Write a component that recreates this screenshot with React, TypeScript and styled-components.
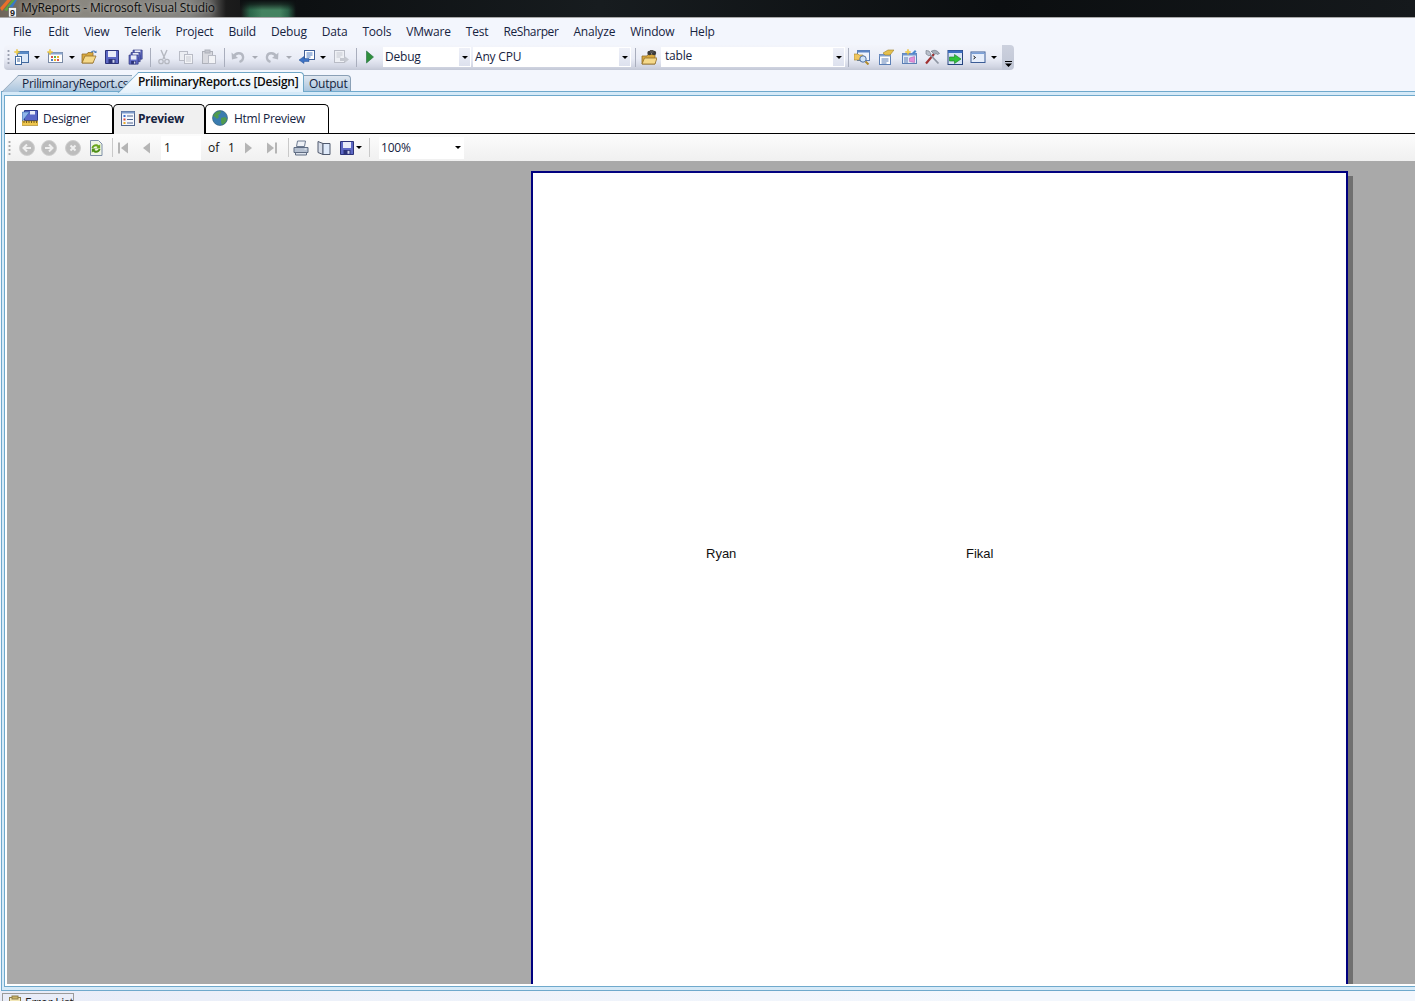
import React from "react";
import styled, { createGlobalStyle } from "styled-components";

const Global = createGlobalStyle`
  html, body { margin: 0; padding: 0; background: #f3f6fd; }
  body { font-family: "Open Sans", "Liberation Sans", sans-serif; font-size: 12px; color: #14233c; }
`;

const Page = styled.div`
  width: 1415px;
  height: 1001px;
  overflow: hidden;
  display: flex;
  flex-direction: column;
  background: #f3f6fd;
`;

const TitleBar = styled.div`
  height: 17px;
  flex: none;
  display: flex;
  align-items: flex-start;
  gap: 4px;
  border-bottom: 1px solid #a9a9a9;
  background:
    linear-gradient(180deg, #0c0f11 0, rgba(12, 15, 17, 0.75) 25%, rgba(12, 15, 17, 0.1) 60%) 240px 0 / 56px 100% no-repeat,
    linear-gradient(90deg, transparent 241px, #2f7050 250px, #4a9069 262px, #4a9069 280px, #2f6b4e 288px, transparent 296px),
    linear-gradient(90deg, #6e655a 0, #8b8880 70px, #84837f 190px, #666563 210px, #1c1c1c 226px, #0d1012 300px, #171c1f 600px, #0b0e10 1000px, #15191c 1415px);
`;

const TitleText = styled.span`
  font-size: 12px;
  line-height: 15px;
  color: #0c0c0c;
  text-shadow: 0 0 4px rgba(255, 255, 255, 0.55);
  letter-spacing: -0.13px;
  white-space: nowrap;
`;

const MenuBar = styled.nav`
  height: 27px;
  flex: none;
  display: flex;
  align-items: center;
  gap: 15px;
  padding-left: 13px;
`;

const MenuItem = styled.span`
  color: #16233f;
  white-space: nowrap;
  letter-spacing: -0.18px;
  &:first-child {
    margin-right: 2px;
  }
  &:nth-child(12) {
    letter-spacing: -0.4px;
  }
`;

const ToolRow = styled.div`
  height: 25px;
  flex: none;
  display: flex;
  align-items: stretch;
`;

const ToolBar = styled.div`
  margin-left: 4px;
  width: 998px;
  display: flex;
  align-items: center;
  padding: 0 0 1px 2px;
  box-sizing: border-box;
  border-radius: 4px 0 0 4px;
  background: linear-gradient(180deg, #f3f5fb 0%, #e9ecf6 55%, #d3d7e4 85%, #c3c8d6 100%);
`;

const Overflow = styled.div`
  width: 12px;
  border-radius: 0 4px 4px 0;
  background: linear-gradient(180deg, #ccd1de, #c0c6d5);
  display: flex;
  align-items: flex-end;
  justify-content: center;
  padding-bottom: 3px;
  box-sizing: border-box;
`;

const Grip = styled.span<{ $w: number; $color: string }>`
  width: ${(p) => p.$w}px;
  flex: none;
  align-self: center;
  height: 16px;
  box-sizing: border-box;
  background-image: radial-gradient(circle, ${(p) => p.$color} 1px, transparent 1.2px);
  background-size: 3px 4px;
  background-repeat: repeat-y;
  background-position: 1px 0;
`;

const Slot = styled.span<{ $w: number }>`
  width: ${(p) => p.$w}px;
  flex: none;
  height: 100%;
  display: flex;
  align-items: center;
  justify-content: center;
`;

const Separator = styled.span<{ $w: number; $color: string }>`
  width: ${(p) => p.$w}px;
  flex: none;
  height: 19px;
  display: flex;
  justify-content: center;
  &::before {
    content: "";
    width: 1px;
    background: ${(p) => p.$color};
  }
`;

const Combo = styled.div<{ $w: number; $h: number; $ml?: number }>`
  width: ${(p) => p.$w}px;
  height: ${(p) => p.$h}px;
  margin-left: ${(p) => p.$ml ?? 0}px;
  flex: none;
  box-sizing: border-box;
  display: flex;
  align-items: center;
  background: #fff;
  padding: 1px 1px 1px 2px;
  color: #16233f;
`;

const ComboText = styled.span<{ $lift?: number; $indent?: number }>`
  flex: 1;
  letter-spacing: -0.2px;
  white-space: nowrap;
  padding-left: ${(p) => p.$indent ?? 0}px;
  padding-bottom: ${(p) => p.$lift ?? 0}px;
`;

const ComboButton = styled.span<{ $plain?: boolean }>`
  width: 11px;
  align-self: stretch;
  display: flex;
  align-items: center;
  justify-content: center;
  background: ${(p) => (p.$plain ? "#fff" : "linear-gradient(180deg, #eef0f8, #dde1ee)")};
`;

const TabStrip = styled.div`
  height: 21px;
  flex: none;
  display: flex;
  align-items: flex-end;
  position: relative;
  z-index: 1;
`;

const FirstTab = styled.div`
  position: relative;
  z-index: 1;
  margin-left: 18px;
  width: 114px;
  height: 16px;
  box-sizing: border-box;
  padding-left: 4px;
  border-top: 1px solid #8aa0b6;
  background: linear-gradient(180deg, #dfe6ef, #a8c4dd);
  color: #15233d;
  line-height: 15px;
  letter-spacing: -0.33px;
  white-space: nowrap;
  &::before {
    content: "";
    position: absolute;
    z-index: -1;
    top: -1px;
    left: -8px;
    width: 16px;
    height: 16px;
    border: 1px solid #8aa0b6;
    border-width: 1px 0 0 1px;
    transform: skewX(-45deg);
    background: linear-gradient(180deg, #dfe6ef, #a8c4dd);
  }
`;

const ActiveTab = styled.div`
  position: relative;
  z-index: 3;
  margin-left: 6px;
  margin-bottom: -1px;
  width: 166px;
  height: 20px;
  box-sizing: border-box;
  border: 1px solid #6fa6c6;
  border-width: 1px 1px 0 0;
  border-radius: 0 4px 0 0;
  background: linear-gradient(180deg, #ffffff, #e4f1fb);
  font-weight: 600;
  color: #0c0c0c;
  line-height: 17px;
  letter-spacing: -0.27px;
  white-space: nowrap;
  &::before {
    content: "";
    position: absolute;
    z-index: -1;
    top: -1px;
    left: -10px;
    width: 20px;
    height: 20px;
    border: 1px solid #6fa6c6;
    border-width: 1px 0 0 1px;
    transform: skewX(-45deg);
    background: linear-gradient(180deg, #ffffff, #e4f1fb);
  }
`;

const PlainTab = styled.div`
  position: relative;
  z-index: 1;
  width: 47px;
  height: 16px;
  box-sizing: border-box;
  padding-left: 5px;
  border: 1px solid #8aa0b6;
  border-width: 1px 1px 0 0;
  border-radius: 0 4px 0 0;
  background: linear-gradient(180deg, #e0e7f0, #a8c4dd);
  color: #15233d;
  line-height: 15px;
  letter-spacing: -0.25px;
`;

const Well = styled.div`
  flex: none;
  height: 900px;
  box-sizing: border-box;
  margin-left: 1px;
  border: 1px solid #6fa9cc;
  border-width: 1px 0 1px 1px;
  padding: 3px 0 3px 2px;
  background: #d6eaf8;
  display: flex;
`;

const WellInner = styled.div`
  flex: 1;
  min-width: 0;
  box-sizing: border-box;
  border: 1px solid #6fa9cc;
  border-width: 1px 0 1px 1px;
  background: #fff;
  padding: 8px 0 2px 0;
  display: flex;
  flex-direction: column;
`;

const ViewTabs = styled.div`
  height: 30px;
  flex: none;
  box-sizing: border-box;
  display: flex;
  padding-left: 10px;
  border-bottom: 1px solid #000;
`;

const ViewTab = styled.div<{ $w: number; $active?: boolean; $pl: number; $gap: number }>`
  width: ${(p) => p.$w}px;
  flex: none;
  height: ${(p) => (p.$active ? 30 : 29)}px;
  box-sizing: border-box;
  display: flex;
  align-items: center;
  gap: ${(p) => p.$gap}px;
  padding: 0 0 ${(p) => (p.$active ? 3 : 2)}px ${(p) => p.$pl}px;
  border: 1px solid #000;
  border-bottom: 0;
  border-radius: 5px 5px 0 0;
  background: ${(p) => (p.$active ? "#f0f0f0" : "#fff")};
  font-weight: ${(p) => (p.$active ? 700 : 400)};
  color: #16233f;
  letter-spacing: -0.28px;
`;

const ReportBar = styled.div`
  height: 27px;
  flex: none;
  margin-left: 2px;
  display: flex;
  align-items: center;
  background: linear-gradient(180deg, #fcfcfc, #f0f0f0);
`;

const PageInput = styled.div`
  width: 40px;
  height: 24px;
  flex: none;
  box-sizing: border-box;
  background: #fff;
  padding-left: 3px;
  line-height: 24px;
  color: #111;
`;

const PlainLabel = styled.span<{ $w: number }>`
  width: ${(p) => p.$w}px;
  flex: none;
  box-sizing: border-box;
  padding-left: 7px;
  color: #111;
`;

const Canvas = styled.div`
  flex: 1;
  min-height: 0;
  margin-left: 2px;
  background: #a9a9a9;
  overflow: hidden;
  padding: 10px 0 0 524px;
`;

const Sheet = styled.div`
  width: 817px;
  height: 1000px;
  box-sizing: border-box;
  border: 2px solid #00007f;
  background: #fff;
  box-shadow: 5px 5px 0 #707070;
  padding: 373px 0 0 173px;
  display: flex;
  font-family: "Liberation Sans", Arial, sans-serif;
  font-size: 13px;
  color: #111;
`;

const ReportCell = styled.span`
  width: 260px;
  flex: none;
  height: 16px;
  line-height: 16px;
`;

const BottomBar = styled.div`
  flex: 1;
  background: linear-gradient(90deg, #e8ecf8 0, #eef2fa 400px, #f3f7fd 1000px);
  padding: 2px 0 0 2px;
`;

const BottomTab = styled.div`
  width: 72px;
  height: 20px;
  box-sizing: border-box;
  border: 1px solid #9a9a9a;
  display: flex;
  align-items: flex-start;
  gap: 2px;
  padding: 1px 0 0 4px;
  font-size: 12px;
  line-height: 16px;
  color: #222;
  white-space: nowrap;
  overflow: hidden;
  letter-spacing: -0.25px;
`;

const Ico = styled.svg`
  width: 16px;
  height: 16px;
  flex: none;
  display: block;
`;

const LogoSvg = styled.svg`
  width: 17px;
  height: 17px;
  flex: none;
  display: block;
`;

const Arrow = styled.span<{ $muted?: boolean }>`
  width: 0;
  height: 0;
  border-left: 3px solid transparent;
  border-right: 3px solid transparent;
  border-top: 3px solid ${(p) => (p.$muted ? "#a8abb4" : "#000")};
`;

const Chevron = styled.svg`
  width: 7px;
  height: 7px;
  display: block;
`;

const Icon = ({ children }: { children: React.ReactNode }) => <Ico viewBox="0 0 16 16">{children}</Ico>;

const Star = ({ x = 0, y = 0 }: { x?: number; y?: number }) => (
  <g transform={`translate(${x} ${y})`}>
    <path d="M3 0l.8 2.2L6 3l-2.2.8L3 6l-.8-2.2L0 3l2.2-.8z" fill="#f6d44a" stroke="#e2b324" strokeWidth=".4" />
  </g>
);

const NewProjectIcon = () => (
  <Icon>
    <rect x="3.5" y="2.5" width="11" height="11" fill="#dce9f8" stroke="#41699e" />
    <rect x="3.5" y="2.5" width="11" height="2.5" fill="#5a8bc6" />
    <rect x="1.5" y="7.5" width="6" height="8" fill="#fff" stroke="#41699e" />
    <path d="M3 10h3M3 12h3" stroke="#41699e" />
    <Star x={0} y={0} />
  </Icon>
);
const AddItemIcon = () => (
  <Icon>
    <rect x="1.5" y="3.5" width="14" height="10" fill="#fdfdfd" stroke="#7a8aa5" />
    <rect x="1.5" y="3.5" width="14" height="2" fill="#8aa6cf" />
    <rect x="4" y="7" width="2" height="2" fill="#d9534f" />
    <rect x="7" y="7" width="2" height="2" fill="#5cae4a" />
    <rect x="10" y="7" width="2" height="2" fill="#e8b32a" />
    <rect x="4" y="10" width="2" height="2" fill="#4a7cc8" />
    <rect x="7" y="10" width="2" height="2" fill="#e8b32a" />
    <rect x="10" y="10" width="2" height="2" fill="#d9534f" />
    <Star x={0} y={0} />
  </Icon>
);
const OpenIcon = () => (
  <Icon>
    <path d="M1 5h5l1-1.500h5V14H1z" fill="#d9a93e" stroke="#94702a" strokeWidth=".8" />
    <path d="M1 14l3-7h11l-3 7z" fill="#f5d98a" stroke="#94702a" strokeWidth=".8" />
    <path d="M10 3.500c1.500-2 3.500-2 4.500-.5" fill="none" stroke="#4e7db8" strokeWidth="1.100" />
    <path d="M15.500 1.500v2.500h-2.500z" fill="#4e7db8" />
  </Icon>
);
const Floppy = ({ c = "#5d68c4", d = "#2c3378" }: { c?: string; d?: string }) => (
  <>
    <path d="M1.500 1.500h13v13h-13z" fill={c} stroke={d} />
    <rect x="4" y="2" width="8" height="6" fill="#e9ecf8" />
    <rect x="4.500" y="10" width="7" height="4.500" fill="#2c3378" />
    <rect x="8.500" y="10.800" width="2" height="3" fill="#cdd3ee" />
  </>
);
const SaveIcon = () => (
  <Icon>
    <Floppy />
  </Icon>
);
const SaveAllIcon = () => (
  <Icon>
    <g transform="translate(5 0) scale(.7)">
      <Floppy />
    </g>
    <g transform="translate(3 2.500) scale(.7)">
      <Floppy />
    </g>
    <g transform="translate(1 5) scale(.7)">
      <Floppy />
    </g>
  </Icon>
);
const CutIcon = () => (
  <Icon>
    <path d="M5 1l4 9M11 1l-4 9" stroke="#b5b8c0" strokeWidth="1.400" fill="none" />
    <circle cx="5" cy="12.500" r="2.200" fill="none" stroke="#b5b8c0" strokeWidth="1.300" />
    <circle cx="11" cy="12.500" r="2.200" fill="none" stroke="#b5b8c0" strokeWidth="1.300" />
  </Icon>
);
const CopyIcon = () => (
  <Icon>
    <rect x="1.500" y="2.500" width="8" height="9" fill="#eceef3" stroke="#b9bcc6" />
    <rect x="6.500" y="5.500" width="8" height="9" fill="#f3f4f7" stroke="#b9bcc6" />
    <path d="M8 8h5M8 10h5M8 12h5" stroke="#c7cad2" />
  </Icon>
);
const PasteIcon = () => (
  <Icon>
    <rect x="1.500" y="2.500" width="10" height="12" fill="#d9dae0" stroke="#aeb1ba" />
    <rect x="4" y="1" width="5" height="3" fill="#c3c5cd" stroke="#aeb1ba" />
    <rect x="7.500" y="6.500" width="7" height="8" fill="#f2f3f6" stroke="#b9bcc6" />
  </Icon>
);
const UndoIcon = ({ flip = false }: { flip?: boolean }) => (
  <Icon>
    <g transform={flip ? "translate(16 0) scale(-1 1)" : undefined}>
      <path d="M4 7.500c1.500-4 8-4.500 9 0 .5 2.500-1 4.500-3.500 5.500" fill="none" stroke="#b4b8c2" strokeWidth="2.400" />
      <path d="M1.500 3.500l.5 7 6-1.500z" fill="#b4b8c2" />
    </g>
  </Icon>
);
const NavIcon = () => (
  <Icon>
    <rect x="5.500" y="1.500" width="10" height="9" fill="#fff" stroke="#3f5f98" />
    <path d="M7.500 4h6M7.500 6h6M7.500 8h4" stroke="#4b78c0" />
    <path d="M0 11l5-3.500v2h5v3H5v2z" fill="#3d72c4" stroke="#234f92" strokeWidth=".5" />
  </Icon>
);
const GhostNavIcon = () => (
  <Icon>
    <rect x="1.500" y="1.500" width="10" height="12" fill="#eef0f5" stroke="#b9bcc6" />
    <path d="M3.500 4h6M3.500 6h6M3.500 8h4" stroke="#c6c9d1" />
    <path d="M16 10.500l-4.500-3.500v2H7v3h4.500v2z" fill="#c5c8d0" />
  </Icon>
);
const PlayIcon = () => (
  <Icon>
    <path d="M4.500 2l7 6-7 6z" fill="#2f8f3c" stroke="#1f6d3b" strokeWidth=".6" />
  </Icon>
);
const FindFolderIcon = () => (
  <Icon>
    <path d="M1 7h5l1-1.500h7V15H1z" fill="#d9a93e" stroke="#8f6d28" strokeWidth=".8" />
    <path d="M1 15l2.500-6H16l-2 6z" fill="#f5d98a" stroke="#8f6d28" strokeWidth=".8" />
    <circle cx="8.500" cy="4" r="2.200" fill="#3b3b3b" />
    <circle cx="13" cy="4" r="2.200" fill="#3b3b3b" />
    <rect x="9" y="1" width="3.500" height="3" fill="#555" />
  </Icon>
);
const SolutionIcon = () => (
  <Icon>
    <rect x="3.500" y="1.500" width="12" height="10" fill="#eef4fc" stroke="#5b7fb5" />
    <rect x="3.500" y="1.500" width="12" height="2" fill="#5b86c6" />
    <path d="M0 5h4l1 1h4v5H0z" fill="#efc660" stroke="#a27f2e" strokeWidth=".6" />
    <circle cx="9" cy="10" r="3.200" fill="#cfe4f8" stroke="#4f6f9f" />
    <path d="M11.500 12.500l3 3" stroke="#b08a2c" strokeWidth="2" />
  </Icon>
);
const PropsIcon = () => (
  <Icon>
    <rect x="1.500" y="5.500" width="11" height="10" fill="#fff" stroke="#5b7fb5" />
    <rect x="1.500" y="5.500" width="11" height="2" fill="#86a4d0" />
    <path d="M3.500 10h7M3.500 12h7M3.500 14h5" stroke="#5b7fb5" />
    <path d="M5 4l5-3h6l-4 5H7z" fill="#e5c04e" stroke="#9f822a" strokeWidth=".6" />
  </Icon>
);
const ToolboxIcon = () => (
  <Icon>
    <rect x="1.500" y="4.500" width="14" height="10" fill="#e2ebf8" stroke="#5b7fb5" />
    <rect x="1.500" y="4.500" width="14" height="2" fill="#6d95cf" />
    <path d="M3 9h4M3 11h4M3 13h4" stroke="#5b7fb5" />
    <path d="M8.500 9l5-1.500v6l-5-1z" fill="#e38fd8" stroke="#a457a8" strokeWidth=".5" />
    <Star x={4} y={0} />
    <path d="M11 4l3-3 1.500 1.500-3 3z" fill="#4b88d0" />
  </Icon>
);
const ToolsIcon = () => (
  <Icon>
    <path d="M2 14.500L10 5" stroke="#a03030" strokeWidth="2.200" />
    <path d="M7 2.500c3-2 6-1.500 8.500 2l-2 1-1.500-1-1.500 1-3-3z" fill="#a6adb8" stroke="#666e7c" strokeWidth=".6" />
    <path d="M14.500 14.500L6 5.500" stroke="#8f96a3" strokeWidth="1.800" />
    <path d="M2 1.500l3 .5 2 3-2 2-3-2z" fill="#b9c0cc" stroke="#6d7482" strokeWidth=".6" />
  </Icon>
);
const ImmediateIcon = () => (
  <Icon>
    <rect x="1" y="1.500" width="14.500" height="14" fill="#d7e4f6" stroke="#26447e" />
    <rect x="1" y="1.500" width="14.500" height="2.500" fill="#3e6fc0" />
    <path d="M2.500 8h5V5.500l6.500 4.500-6.500 4.500V12h-5z" fill="#2fc23b" stroke="#167a20" strokeWidth=".6" />
  </Icon>
);
const ConsoleIcon = () => (
  <Icon>
    <rect x="1" y="3" width="14" height="10.500" fill="#e6eefb" stroke="#3b5c96" />
    <rect x="1.500" y="3.500" width="13" height="1.500" fill="#7aa0d8" />
    <path d="M3.500 7l2 1.500-2 1.500" fill="none" stroke="#111" />
  </Icon>
);
const CircleGlyph = ({ d }: { d: string }) => (
  <Icon>
    <circle cx="8" cy="8" r="7.500" fill="#bdbdbd" stroke="#cfcfcf" />
    <path d={d} fill="none" stroke="#efefef" strokeWidth="2" />
  </Icon>
);
const RefreshIcon = () => (
  <Icon>
    <path d="M2.500 .5h8l3.500 3.500v11.500H2.500z" fill="#f0f5e6" stroke="#7f8fa8" />
    <path d="M3.500 8c.5-3.500 5-5 7.500-2.500l1.200-1.200v4.200H8l1.600-1.600c-1.600-1.300-3.800-.5-4.100 1.100z" fill="#6aa51a" />
    <path d="M12.500 9c-.5 3.500-5 5-7.500 2.500l-1.200 1.200V8.500H8l-1.600 1.600c1.600 1.300 3.800.5 4.100-1.100z" fill="#4d8f14" />
  </Icon>
);
const StepIcon = ({ dir, bar }: { dir: "l" | "r"; bar?: boolean }) => (
  <Icon>
    <g transform={dir === "r" ? "translate(16 0) scale(-1 1)" : undefined}>
      {bar && <rect x="2" y="2.500" width="2" height="11" fill="#b5b5b5" />}
      <path d="M12 2.500v11L5 8z" fill="#b5b5b5" />
    </g>
  </Icon>
);
const PrintIcon = () => (
  <Icon>
    <path d="M4.500 1h8l-1 5.500h-8z" fill="#eef1f6" stroke="#6c7a90" />
    <path d="M1 7.500h14v5H1z" fill="#b5c0d0" stroke="#5f6c82" />
    <path d="M2.500 12.500h11v2.500h-11z" fill="#dde3ec" stroke="#5f6c82" />
    <rect x="11.500" y="8.500" width="2" height="1" fill="#eef3fa" />
  </Icon>
);
const BookIcon = () => (
  <Icon>
    <path d="M2 1.500l5 2v11l-5-2z" fill="#d7dde8" stroke="#505a6e" />
    <path d="M7 3.500h7v11H7z" fill="#dfeafa" stroke="#505a6e" />
  </Icon>
);
const DesignerIcon = () => (
  <Icon>
    <path d="M2.500 .5h13v10h-13z" fill="#5a68c8" stroke="#2c3a8c" />
    <rect x="8" y="1" width="5" height="3.500" fill="#e9ecf8" />
    <path d="M.5 2v9l7-9z" fill="#8fb6ea" stroke="#2c5fa8" strokeWidth=".6" />
    <rect x="0" y="11" width="16" height="4.500" fill="#efc64d" stroke="#a17f22" strokeWidth=".6" />
    <path d="M2 11v2M4.500 11v2M7 11v2M9.500 11v2M12 11v2M14.500 11v2" stroke="#7b6016" />
  </Icon>
);
const PreviewIcon = () => (
  <Icon>
    <rect x="1.500" y="1.500" width="13" height="14" fill="#f4f7fd" stroke="#50658e" />
    <rect x="1.500" y="1.500" width="13" height="2" fill="#7f9ccb" />
    <rect x="3.500" y="5" width="2" height="2" fill="#3a6bd0" />
    <rect x="3.500" y="8.500" width="2" height="2" fill="#d9453b" />
    <rect x="3.500" y="12" width="2" height="2" fill="#e7a826" />
    <path d="M7 6h6M7 9.500h6M7 13h6" stroke="#50658e" />
  </Icon>
);
const GlobeIcon = () => (
  <Icon>
    <circle cx="8" cy="8" r="7.500" fill="#3a7cb0" />
    <path d="M3 3c2-2 5-2 6-1.500L8 4 6 5l1 2-2 2-2-2-2-1c0-1 1-2 2-3zM9 8l4-1 2 2c-.5 3-2.500 5-5 6l-1-3z" fill="#4f9a4f" />
    <circle cx="8" cy="8" r="7.500" fill="none" stroke="#2b5a6f" strokeWidth=".6" />
  </Icon>
);
const ErrorListIcon = () => (
  <Icon>
    <rect x="2.500" y="2.500" width="11" height="13" fill="#f2e7b8" stroke="#8d7c46" />
    <rect x="5" y="1" width="6" height="3" fill="#c9b36a" stroke="#8d7c46" />
  </Icon>
);
const VsLogo = () => (
  <LogoSvg viewBox="0 0 17 17">
    <path d="M0 8L7 0h4L2 11z" fill="#e8702a" />
    <path d="M4 10L12 0h3L7 11z" fill="#5fa63c" />
    <path d="M9 7l6-7h2l-5 8z" fill="#3a78c8" />
    <rect x="8.500" y="7.500" width="8" height="9.500" fill="#f4f4f4" stroke="#555" strokeWidth=".6" />
    <text x="12.500" y="15.500" fontSize="9" fontWeight="700" textAnchor="middle" fill="#222" fontFamily="Liberation Sans">9</text>
  </LogoSvg>
);

const menu = ["File", "Edit", "View", "Telerik", "Project", "Build", "Debug", "Data", "Tools", "VMware", "Test", "ReSharper", "Analyze", "Window", "Help"];

const Sep = () => <Separator $w={4} $color="#a9aebd" />;

export default function App() {
  return (
    <Page>
      <Global />
      <TitleBar>
        <VsLogo />
        <TitleText>MyReports - Microsoft Visual Studio</TitleText>
      </TitleBar>
      <MenuBar>
        {menu.map((m) => (
          <MenuItem key={m}>{m}</MenuItem>
        ))}
      </MenuBar>
      <ToolRow>
        <ToolBar>
          <Grip $w={7} $color="#9aa0b0" />
          <Slot $w={17}><NewProjectIcon /></Slot>
          <Slot $w={14}><Arrow /></Slot>
          <Slot $w={22}><AddItemIcon /></Slot>
          <Slot $w={11}><Arrow /></Slot>
          <Slot $w={24}><OpenIcon /></Slot>
          <Slot $w={22}><SaveIcon /></Slot>
          <Slot $w={24}><SaveAllIcon /></Slot>
          <Slot $w={6}><Sep /></Slot>
          <Slot $w={21}><CutIcon /></Slot>
          <Slot $w={24}><CopyIcon /></Slot>
          <Slot $w={22}><PasteIcon /></Slot>
          <Slot $w={8}><Sep /></Slot>
          <Slot $w={20}><UndoIcon /></Slot>
          <Slot $w={14}><Arrow $muted /></Slot>
          <Slot $w={20}><UndoIcon flip /></Slot>
          <Slot $w={14}><Arrow $muted /></Slot>
          <Slot $w={22}><NavIcon /></Slot>
          <Slot $w={10}><Arrow /></Slot>
          <Slot $w={26}><GhostNavIcon /></Slot>
          <Slot $w={4}><Sep /></Slot>
          <Slot $w={24}><PlayIcon /></Slot>
          <Combo $w={88} $h={20} $ml={1}>
            <ComboText $lift={1}>Debug</ComboText>
            <ComboButton><Arrow /></ComboButton>
          </Combo>
          <Combo $w={158} $h={20} $ml={2}>
            <ComboText $lift={1}>Any CPU</ComboText>
            <ComboButton><Arrow /></ComboButton>
          </Combo>
          <Slot $w={8}><Sep /></Slot>
          <Slot $w={20}><FindFolderIcon /></Slot>
          <Combo $w={184} $h={20} $ml={2}>
            <ComboText $lift={3} $indent={2}>table</ComboText>
            <ComboButton><Arrow /></ComboButton>
          </Combo>
          <Slot $w={6}><Sep /></Slot>
          <Slot $w={22}><SolutionIcon /></Slot>
          <Slot $w={25}><PropsIcon /></Slot>
          <Slot $w={22}><ToolboxIcon /></Slot>
          <Slot $w={24}><ToolsIcon /></Slot>
          <Slot $w={22}><ImmediateIcon /></Slot>
          <Slot $w={24}><ConsoleIcon /></Slot>
          <Slot $w={8}><Arrow /></Slot>
        </ToolBar>
        <Overflow>
          <Chevron viewBox="0 0 7 7">
            <path d="M0 1h7v1H0zM0 3.500h7L3.500 7z" fill="#000" />
          </Chevron>
        </Overflow>
      </ToolRow>
      <TabStrip>
        <FirstTab>PriliminaryReport.cs</FirstTab>
        <ActiveTab>PriliminaryReport.cs [Design]</ActiveTab>
        <PlainTab>Output</PlainTab>
      </TabStrip>
      <Well>
        <WellInner>
          <ViewTabs>
            <ViewTab $w={98} $pl={6} $gap={5}><DesignerIcon /><span>Designer</span></ViewTab>
            <ViewTab $active $w={92} $pl={6} $gap={2}><PreviewIcon /><span>Preview</span></ViewTab>
            <ViewTab $w={124} $pl={6} $gap={6}><GlobeIcon /><span>Html Preview</span></ViewTab>
          </ViewTabs>
          <ReportBar>
            <Grip $w={9} $color="#a8a8a8" />
            <Slot $w={22}><CircleGlyph d="M12 8H5M8 4.500L4.500 8 8 11.500" /></Slot>
            <Slot $w={22}><CircleGlyph d="M4 8h7M8 4.500L11.500 8 8 11.500" /></Slot>
            <Slot $w={26}><CircleGlyph d="M5.500 5.500l5 5M10.500 5.500l-5 5" /></Slot>
            <Slot $w={20}><RefreshIcon /></Slot>
            <Slot $w={12}><Separator $w={4} $color="#c9c9c9" /></Slot>
            <Slot $w={12}><StepIcon dir="l" bar /></Slot>
            <Slot $w={31}><StepIcon dir="l" /></Slot>
            <PageInput>1</PageInput>
            <PlainLabel $w={20}>of</PlainLabel>
            <PlainLabel $w={17}>1</PlainLabel>
            <Slot $w={22}><StepIcon dir="r" /></Slot>
            <Slot $w={22}><StepIcon dir="r" bar /></Slot>
            <Slot $w={12}><Separator $w={4} $color="#c9c9c9" /></Slot>
            <Slot $w={14}><PrintIcon /></Slot>
            <Slot $w={32}><BookIcon /></Slot>
            <Slot $w={14}><SaveIcon /></Slot>
            <Slot $w={10}><Arrow /></Slot>
            <Slot $w={10}><Separator $w={4} $color="#c9c9c9" /></Slot>
            <Combo $w={85} $h={22} $ml={5}>
              <ComboText>100%</ComboText>
              <ComboButton $plain><Arrow /></ComboButton>
            </Combo>
          </ReportBar>
          <Canvas>
            <Sheet>
              <ReportCell>Ryan</ReportCell>
              <ReportCell>Fikal</ReportCell>
            </Sheet>
          </Canvas>
        </WellInner>
      </Well>
      <BottomBar>
        <BottomTab>
          <ErrorListIcon />
          <span>Error List</span>
        </BottomTab>
      </BottomBar>
    </Page>
  );
}
